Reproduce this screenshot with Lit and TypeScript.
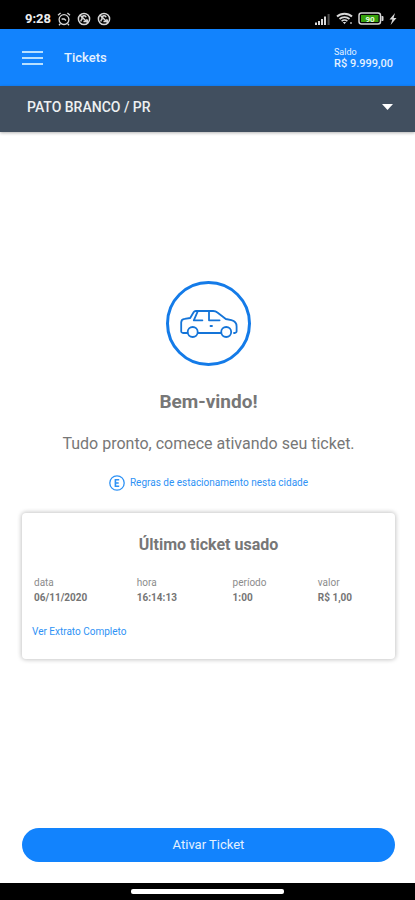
import { LitElement, html, css, svg } from "lit";
import { customElement } from "lit/decorators.js";

const mutedIcon = svg`
  <circle cx="7" cy="7" r="5.6" fill="none" stroke="currentColor" stroke-width="1.5" />
  <path d="M4 9.6V8.2L5 7.2V5.8a2.1 2.1 0 0 1 4.1-.6M9.3 7.4l1 1v1.2H6.4" fill="none" stroke="currentColor" stroke-width="1.5" />
  <path d="M3.2 3.2l7.6 7.6" stroke="currentColor" stroke-width="1.5" />
`;

@customElement("status-bar")
class StatusBar extends LitElement {
  static styles = css`
    :host {
      display: flex;
      align-items: center;
      justify-content: space-between;
      height: 21px;
      padding: 8px 18px 0 25px;
      background: #000;
      color: #d8d8d8;
    }
    .group {
      display: flex;
      align-items: center;
      gap: 6px;
    }
    .clock {
      font-size: 13px;
      font-weight: 700;
      line-height: 16px;
      color: #eee;
    }
    .right {
      gap: 5px;
    }
    svg {
      display: block;
    }
  `;

  render() {
    return html`
      <div class="group">
        <span class="clock">9:28</span>
        <svg width="14" height="14" viewBox="0 0 14 14" fill="none" stroke="currentColor" stroke-width="1.3">
          <circle cx="7" cy="7.6" r="4.9" />
          <path d="M1 3.2L3.6 1M13 3.2L10.4 1M4.6 7h2.6l1.8 1.4M3.4 11.6L2 13.2M10.6 11.6L12 13.2" />
        </svg>
        <svg width="14" height="14" viewBox="0 0 14 14">${mutedIcon}</svg>
        <svg width="14" height="14" viewBox="0 0 14 14">${mutedIcon}</svg>
      </div>
      <div class="group right">
        <svg width="17" height="12" viewBox="0 0 17 12" fill="currentColor">
          <path d="M1 9.5h2V12H1zM4 8h2v4H4zM7 6h2v6H7zM10 3.5h2V12h-2z" />
          <path d="M13.6 1h2v11h-2z" opacity=".35" />
        </svg>
        <svg width="17" height="13" viewBox="0 0 17 13" fill="none" stroke="currentColor">
          <path d="M1 4.4C5 .7 12 .7 16 4.4" stroke-width="2" />
          <path d="M3.5 7C6.4 4.4 10.6 4.4 13.5 7" stroke-width="1.7" />
          <path d="M5.6 9.2C7.2 7.9 9.8 7.9 11.4 9.2" stroke-width="1.5" />
          <path d="M6.800 10h3.400L8.500 12.200z" fill="currentColor" stroke="none" />
          <path d="M14 10h2v2h-2z" fill="currentColor" stroke="none" opacity=".6" />
        </svg>
        <svg width="26" height="13" viewBox="0 0 26 13">
          <rect x="1" y="1" width="21.5" height="11" rx="2.5" fill="none" stroke="currentColor" stroke-width="1.5" />
          <path d="M23.5 4h1a1 1 0 0 1 1 1v3a1 1 0 0 1-1 1h-1z" fill="currentColor" />
          <rect x="3" y="3" width="17.5" height="7" fill="#37a10d" />
          <text x="12" y="9.5" font-size="8" font-weight="700" text-anchor="middle" fill="#e8ffe0">90</text>
        </svg>
        <svg width="8" height="12" viewBox="0 0 8 12">
          <path d="M6 0L.5 6.6h2.900L1.600 12 7.500 5H4.600z" fill="currentColor" />
        </svg>
      </div>
    `;
  }
}

@customElement("app-header")
class AppHeader extends LitElement {
  static styles = css`
    :host {
      display: flex;
      align-items: center;
      height: 57px;
      padding: 0 20px 0 22px;
      background: #1283fd;
      color: #e4f1ff;
    }
    .menu {
      display: flex;
      flex-direction: column;
      gap: 4px;
      padding: 0;
      border: 0;
      background: none;
      cursor: pointer;
    }
    .line {
      width: 21px;
      height: 2px;
      background: #b8e0ff;
    }
    .title {
      flex: 1;
      margin: 0 0 0 21px;
      font-size: 13px;
      font-weight: 500;
      line-height: 16px;
    }
    .balance {
      min-width: 61px;
      margin: 0;
      font-size: 11px;
      line-height: 12px;
    }
    .label {
      font-size: 9px;
    }
    .amount {
      margin: 0;
      font-weight: 500;
    }
  `;

  render() {
    return html`
      <button class="menu" aria-label="Menu">
        <span class="line"></span><span class="line"></span><span class="line"></span>
      </button>
      <h1 class="title">Tickets</h1>
      <dl class="balance">
        <dt class="label">Saldo</dt>
        <dd class="amount">R$ 9.999,00</dd>
      </dl>
    `;
  }
}

@customElement("city-picker")
class CityPicker extends LitElement {
  static styles = css`
    :host {
      display: grid;
      align-items: center;
      height: 46px;
      background: #414f5f;
      box-shadow: 0 1px 3px rgba(0, 0, 0, 0.3);
    }
    .select,
    .caret {
      grid-area: 1 / 1;
    }
    .select {
      width: 100%;
      height: 100%;
      padding: 0 40px 4px 27px;
      border: 0;
      appearance: none;
      background: none;
      color: #edf0f2;
      font: 500 14px/20px Roboto, sans-serif;
    }
    .caret {
      justify-self: end;
      margin: 0 22px 4px 0;
      pointer-events: none;
    }
  `;

  render() {
    return html`
      <select class="select" aria-label="Cidade">
        <option>PATO BRANCO / PR</option>
      </select>
      <svg class="caret" width="11" height="6" viewBox="0 0 11 6">
        <path d="M0 0h11L5.5 6z" fill="#fff" />
      </svg>
    `;
  }
}

@customElement("last-ticket")
class LastTicket extends LitElement {
  static styles = css`
    :host {
      display: block;
      padding: 22px 10px 19px;
      border-radius: 4px;
      background: #fff;
      box-shadow: 0 0 4px 1px rgba(0, 0, 0, 0.22);
    }
    .title {
      margin: 0 0 20px;
      font-size: 16px;
      font-weight: 700;
      line-height: 20px;
      text-align: center;
    }
    .data {
      width: 100%;
      table-layout: fixed;
      border-collapse: collapse;
      font-size: 10px;
      line-height: 15px;
      text-align: left;
    }
    .data th,
    .data td {
      padding: 0 2px;
    }
    .data th {
      font-weight: 400;
      color: #8c8c8c;
    }
    .data td {
      font-weight: 700;
      color: #757575;
    }
    .date {
      width: 28%;
    }
    .time {
      width: 26%;
    }
    .period {
      width: 23%;
    }
    .link {
      display: block;
      width: fit-content;
      margin-top: 19px;
      color: #2e92f5;
      font-size: 10px;
      line-height: 16px;
      text-decoration: none;
    }
  `;

  render() {
    return html`
      <h3 class="title">Último ticket usado</h3>
      <table class="data">
        <thead>
          <tr>
            <th class="date" scope="col">data</th>
            <th class="time" scope="col">hora</th>
            <th class="period" scope="col">período</th>
            <th scope="col">valor</th>
          </tr>
        </thead>
        <tbody>
          <tr>
            <td>06/11/2020</td>
            <td>16:14:13</td>
            <td>1:00</td>
            <td>R$ 1,00</td>
          </tr>
        </tbody>
      </table>
      <a class="link" href="#extrato">Ver Extrato Completo</a>
    `;
  }
}

@customElement("app-root")
class AppRoot extends LitElement {
  static styles = css`
    :host {
      display: flex;
      flex-direction: column;
      min-height: 100vh;
      background: #fff;
      color: #777;
      font-family: Roboto, sans-serif;
    }
    .main {
      flex: 1;
      display: flex;
      flex-direction: column;
      justify-content: center;
      padding: 0 20px 0 22px;
      text-align: center;
    }
    .car {
      display: block;
      align-self: center;
      width: 86px;
      height: 86px;
    }
    .welcome {
      margin: 23px 0 0;
      font-size: 19px;
      font-weight: 700;
      line-height: 26px;
    }
    .lead {
      margin: 19px 0 0;
      font-size: 16px;
      line-height: 20px;
    }
    .rules {
      display: flex;
      align-items: center;
      align-self: center;
      gap: 5px;
      margin: 21px 0 22px;
      color: #2e92f5;
      font-size: 10px;
      line-height: 16px;
      text-decoration: none;
    }
    .footer {
      padding: 21px 20px 21px 22px;
    }
    .activate {
      display: block;
      width: 100%;
      height: 34px;
      border: 0;
      border-radius: 17px;
      background: #1283fd;
      color: #e4f1ff;
      font: 400 13px/16px Roboto, sans-serif;
      cursor: pointer;
    }
    .gestures {
      display: flex;
      justify-content: center;
      align-items: center;
      height: 17px;
      background: #000;
    }
    .handle {
      width: 37%;
      height: 5px;
      border-radius: 2px;
      background: #fff;
    }
  `;

  render() {
    return html`
      <status-bar></status-bar>
      <app-header></app-header>
      <city-picker></city-picker>
      <main class="main">
        <svg class="car" viewBox="0 0 86 86" fill="none" stroke="#1474d8" stroke-linejoin="round" stroke-linecap="round">
          <circle cx="42.5" cy="43.5" r="41" stroke="#147be8" stroke-width="3" />
          <g stroke-width="1.8">
            <path d="M21.500 53h-4.500a1.800 1.800 0 0 1-1.800-1.800V42.500a3.800 3.800 0 0 1 3.400-3.700l5.600-.8 3.400-5.700a2.600 2.600 0 0 1 2.200-1.300h17.400c1.600 0 3 .5 4.200 1.500l8.400 6.500 5.600 1.200c3.300.8 5.200 3.200 5.200 6.200v4.800a1.800 1.800 0 0 1-1.800 1.800h-.8M31.800 53h23.500" />
            <circle cx="26.700" cy="52" r="5" />
            <circle cx="60.200" cy="52" r="5" />
            <path d="M31.500 31.800L27.800 40.300h8.600M43 31.500v8.800h10.600M44.500 46h1.500" />
          </g>
        </svg>
        <h2 class="welcome">Bem-vindo!</h2>
        <p class="lead">Tudo pronto, comece ativando seu ticket.</p>
        <a class="rules" href="#regras">
          <svg width="16" height="16" viewBox="0 0 16 16" fill="none" stroke="currentColor">
            <circle cx="8" cy="8" r="7.2" stroke-width="1.3" />
            <path d="M10.200 4.800H6.400v6.400h3.800M6.400 8h3.300" stroke-width="1.600" />
          </svg>
          Regras de estacionamento nesta cidade
        </a>
        <last-ticket></last-ticket>
      </main>
      <div class="footer">
        <button class="activate">Ativar Ticket</button>
      </div>
      <div class="gestures"><span class="handle"></span></div>
    `;
  }
}
